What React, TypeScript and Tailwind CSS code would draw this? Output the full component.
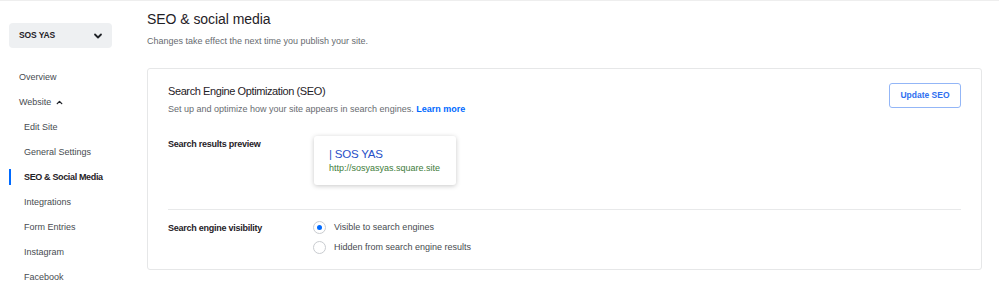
import React from "react";

const font = { fontFamily: "'Liberation Sans', Arial, sans-serif" };

function Chevron({ up = false, className = "" }: { up?: boolean; className?: string }) {
  return (
    <svg viewBox="0 0 12 12" className={className} fill="none" stroke="currentColor" strokeWidth={1.8} strokeLinecap="round" strokeLinejoin="round">
      {up ? <path d="M3 7.5 L6 4.5 L9 7.5" /> : <path d="M3 4.5 L6 7.5 L9 4.5" />}
    </svg>
  );
}

const sub = ["Edit Site", "General Settings", "SEO & Social Media", "Integrations", "Form Entries", "Instagram", "Facebook"];

export default function App() {
  return (
    <div className="w-[999px] h-[285px] overflow-hidden bg-white border-t border-[#eeeeee] flex text-[#1f2227]" style={font}>
      <aside className="w-[147px] shrink-0 pt-[22px]">
        <div className="ml-[9px] w-[103px] h-[25px] rounded-[4px] bg-[#eef0f2] flex items-center justify-between pl-[10px] pr-[8px]">
          <span className="text-[8.5px] font-bold tracking-[-0.1px]">SOS YAS</span>
          <Chevron className="w-[12px] h-[12px] text-[#1f2227]" />
        </div>
        <nav className="mt-[17px] flex flex-col text-[9px] text-[#474b50]">
          <div className="h-[25px] flex items-center pl-[19px]">Overview</div>
          <div className="h-[25px] flex items-center pl-[19px] gap-[4px]">
            Website <Chevron up className="w-[9px] h-[9px] text-[#1f2227]" />
          </div>
          {sub.map((s) => {
            const active = s === "SEO & Social Media";
            return (
              <div key={s} className="h-[25px] flex items-center relative">
                {active && <div className="absolute left-[9px] top-[4px] w-[2px] h-[16px] bg-[#006aff]" />}
                <span className={"pl-[24px] " + (active ? "font-bold tracking-[-0.35px] text-[#1f2227]" : "")}>{s}</span>
              </div>
            );
          })}
        </nav>
      </aside>
      <main className="flex-1 pr-[17px]">
        <h1 className="mt-[7px] text-[14px] leading-[22px] tracking-[-0.05px]">SEO &amp; social media</h1>
        <p className="mt-[5px] text-[9px] leading-[13px] text-[#676b70]">Changes take effect the next time you publish your site.</p>
        <section className="mt-[20px] h-[202px] border border-[#e6e7e8] rounded-[3px] px-[20px] pt-[13px]">
          <div className="flex justify-between">
            <div>
              <h2 className="mt-[1px] text-[11px] leading-[16px] tracking-[-0.4px]">Search Engine Optimization (SEO)</h2>
              <p className="mt-[4px] text-[9px] leading-[13px] text-[#676b70]">
                Set up and optimize how your site appears in search engines.{" "}
                <span className="text-[#006aff] font-bold">Learn more</span>
              </p>
            </div>
            <button className="mt-[1px] w-[72px] h-[25px] border border-[#93b6f7] rounded-[3px] text-[8.5px] font-bold text-[#2f6ff0] flex items-center justify-center">
              Update SEO
            </button>
          </div>
          <div className="mt-[20px] flex">
            <div className="w-[146px] pt-[2px] text-[9px] font-bold tracking-[-0.25px] leading-[13px]">Search results preview</div>
            <div className="w-[142px] h-[49px] rounded-[3px] bg-white shadow-[0_1px_5px_rgba(0,0,0,0.22)] px-[15px] pt-[11px]">
              <div className="text-[11.5px] leading-[15px] tracking-[-0.2px] text-[#2850c8]">| SOS YAS</div>
              <div className="text-[9px] leading-[13px] text-[#3e7c3a]">http://sosyasyas.square.site</div>
            </div>
          </div>
          <div className="mt-[24px] border-t border-[#e8e9ea]" />
          <div className="mt-[11px] flex">
            <div className="w-[145px] pt-[1px] text-[9px] font-bold tracking-[-0.25px] leading-[13px]">Search engine visibility</div>
            <div className="flex flex-col gap-[7px]">
              <label className="flex items-center gap-[8px] h-[13px]">
                <span className="w-[13px] h-[13px] rounded-full border border-[#c9ccd0] flex items-center justify-center">
                  <span className="w-[5px] h-[5px] rounded-full bg-[#006aff]" />
                </span>
                <span className="text-[9px] text-[#474b50]">Visible to search engines</span>
              </label>
              <label className="flex items-center gap-[8px] h-[13px]">
                <span className="w-[13px] h-[13px] rounded-full border border-[#c9ccd0]" />
                <span className="text-[9px] text-[#474b50]">Hidden from search engine results</span>
              </label>
            </div>
          </div>
        </section>
      </main>
    </div>
  );
}
